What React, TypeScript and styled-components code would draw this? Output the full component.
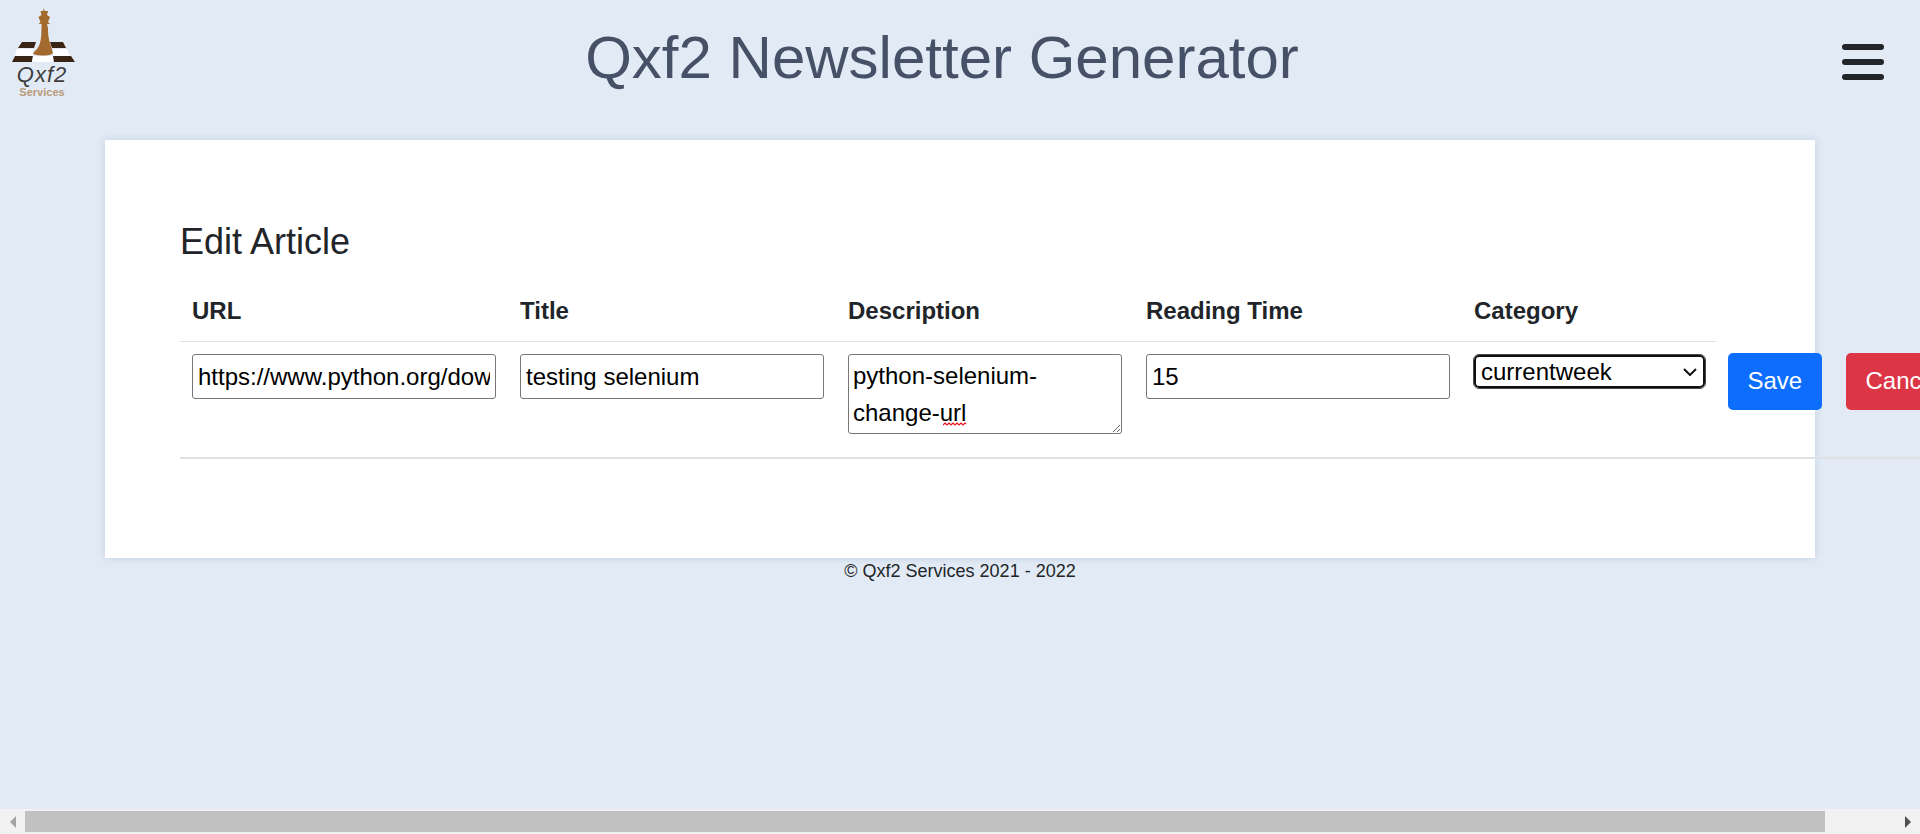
import React from 'react';
import styled, { createGlobalStyle } from 'styled-components';

const GlobalStyle = createGlobalStyle`
    html {
        height: 100%;
    }
    body {
        margin: 0;
        min-height: 100%;
        background-color: #e2ebf5;
        color: #212529;
        font-family: "Liberation Sans", Arial, sans-serif;
        font-size: 24px;
        line-height: 37.5px;
    }
`;

const Header = styled.header`
    display: flex;
    align-items: flex-start;
    height: 140px;
    width: 1920px;
    box-sizing: border-box;
    padding: 8px 36px 0 10px;
`;

const Title = styled.h1`
    flex: 1;
    margin: 14px 0 0;
    padding-right: 34px;
    text-align: center;
    color: #465168;
    font-size: 60px;
    font-weight: 400;
    line-height: 72px;
`;

const Burger = styled.div`
    display: flex;
    flex-direction: column;
    gap: 9px;
    width: 42px;
    margin-top: 36px;
`;

const BurgerBar = styled.span`
    height: 6px;
    border-radius: 3px;
    background-color: #212529;
`;

const Card = styled.main`
    width: 1710px;
    height: 418px;
    box-sizing: border-box;
    margin-left: 105px;
    padding: 81px 0 0 75px;
    background-color: #ffffff;
    box-shadow: 0 0 8px rgba(120, 145, 190, 0.3);
`;

const Heading = styled.h2`
    margin: 0 0 15px;
    font-size: 36px;
    font-weight: 400;
    line-height: 42px;
`;

const Table = styled.table`
    border-collapse: collapse;
    table-layout: fixed;
    width: 1815px;
`;

const HeadCell = styled.th`
    padding: 13.5px 12px 11.5px;
    border-bottom: 1px solid #dee2e6;
    font-weight: 700;
    text-align: left;
`;

const Row = styled.tr`
    border-bottom: 2px solid #dee2e6;
`;

const Cell = styled.td`
    padding: 12.5px 12px;
    vertical-align: top;
`;

const TextInput = styled.input`
    display: block;
    width: 304px;
    height: 45px;
    box-sizing: border-box;
    padding: 1px 5px;
    border: 1px solid #767676;
    border-radius: 3px;
    background-color: #ffffff;
    color: #000000;
    font-family: inherit;
    font-size: 24px;
`;

const AreaWrap = styled.div`
    position: relative;
    margin-bottom: 10px;
`;

const TextArea = styled.textarea`
    display: block;
    width: 274px;
    height: 80px;
    box-sizing: border-box;
    padding: 2px 4px;
    border: 1px solid #767676;
    border-radius: 3px;
    color: #000000;
    font-family: inherit;
    font-size: 24px;
    line-height: 37px;
`;

const Squiggle = styled.svg`
    position: absolute;
    left: 95px;
    top: 68px;
    width: 25px;
    height: 4px;
`;

const CategorySelect = styled.select`
    display: block;
    width: 231px;
    height: 33px;
    margin-top: 1px;
    box-sizing: border-box;
    padding: 0 30px 0 5px;
    appearance: none;
    border: 2px solid #101010;
    border-radius: 5px;
    outline: 1px solid #4a4a4a;
    background-color: #ffffff;
    background-image: url("data:image/svg+xml,%3Csvg xmlns='http://www.w3.org/2000/svg' width='14' height='8'%3E%3Cpath d='M1 1l6 6 6-6' fill='none' stroke='%23111' stroke-width='2'/%3E%3C/svg%3E");
    background-repeat: no-repeat;
    background-position: right 6px center;
    color: #000000;
    font-family: inherit;
    font-size: 24px;
`;

const Button = styled.button<{ $tone: string }>`
    display: block;
    height: 57px;
    margin-top: -1px;
    padding: 0 19.5px;
    border: 0;
    border-radius: 5px;
    background-color: ${(props) => props.$tone};
    color: #ffffff;
    font-family: inherit;
    font-size: 24px;
`;

const Footer = styled.footer`
    width: 1920px;
    text-align: center;
    font-size: 18px;
    line-height: 26px;
`;

const ScrollBar = styled.div`
    position: fixed;
    left: 0;
    right: 0;
    bottom: 0;
    display: flex;
    height: 25px;
    background-color: #f1f1f1;
`;

const ScrollArrow = styled.span<{ $dir: 'left' | 'right' }>`
    display: flex;
    flex: 0 0 25px;
    align-items: center;
    justify-content: center;

    &::before {
        content: '';
        border-top: 6px solid transparent;
        border-bottom: 6px solid transparent;
        border-left: ${(props) => (props.$dir === 'right' ? '6px solid #505050' : '0')};
        border-right: ${(props) => (props.$dir === 'left' ? '6px solid #a3a3a3' : '0')};
    }
`;

const ScrollTrack = styled.div`
    flex: 1;
    padding: 2px 0;
`;

const ScrollThumb = styled.div`
    width: 1800px;
    height: 100%;
    background-color: #c1c1c1;
`;

const Logo = () => (
    <svg width="66" height="90" viewBox="10 8 66 90" style={{ flexShrink: 0 }}>
        {/* plateau */}
        <polygon points="22,42 36,42 34,48 18,48" fill="#3a2415" />
        <polygon points="50,42 63,42 66,48 52,48" fill="#3a2415" />
        <polygon points="17,49 33,49 33,56 15,56" fill="#ffffff" />
        <polygon points="53,49 67,49 70,56 53,56" fill="#ffffff" />
        <polygon points="15,56 33,56 32,62 12,62" fill="#3a2415" />
        <polygon points="33,56 53,56 53,62 32,62" fill="#ffffff" />
        <polygon points="53,56 71,56 75,62 54,62" fill="#3a2415" />
        {/* piece */}
        <path
            d="M43 8l2 3h3l-1 4 3 2-2 5 2 2h-3l1 4c0 8 1 13 3 18l2 7-1 1c-5 2-12 2-19 0l1-2c4-3 6-7 7-14 .5-5 .5-9 .5-14h-3l2-2-2-5 3-2-1-4h3z"
            fill="#a4692d"
        />
        <text x="42" y="82" textAnchor="middle" fontFamily="Liberation Sans, sans-serif" fontSize="22" fontStyle="italic" letterSpacing="1" fill="#3d3d3d">
            Qxf2
        </text>
        <text x="42" y="96" textAnchor="middle" fontFamily="Liberation Sans, sans-serif" fontSize="11" fontWeight="700" fill="#b89a78">
            Services
        </text>
    </svg>
);

const App = () => {
    return (
        <>
            <GlobalStyle />
            <Header>
                <Logo />
                <Title>Qxf2 Newsletter Generator</Title>
                <Burger>
                    <BurgerBar />
                    <BurgerBar />
                    <BurgerBar />
                </Burger>
            </Header>
            <Card>
                <Heading>Edit Article</Heading>
                <Table>
                    <colgroup>
                        <col width="328" />
                        <col width="328" />
                        <col width="298" />
                        <col width="328" />
                        <col width="254" />
                        <col width="118" />
                        <col width="161" />
                    </colgroup>
                    <thead>
                        <tr>
                            <HeadCell>URL</HeadCell>
                            <HeadCell>Title</HeadCell>
                            <HeadCell>Description</HeadCell>
                            <HeadCell>Reading Time</HeadCell>
                            <HeadCell>Category</HeadCell>
                        </tr>
                    </thead>
                    <tbody>
                        <Row>
                            <Cell>
                                <TextInput defaultValue="https://www.python.org/downloads/" />
                            </Cell>
                            <Cell>
                                <TextInput defaultValue="testing selenium" />
                            </Cell>
                            <Cell>
                                <AreaWrap>
                                    <TextArea defaultValue="python-selenium-change-url" spellCheck={false} />
                                    <Squiggle viewBox="0 0 25 4">
                                        <path d="M0 3l2-2 2 2 2-2 2 2 2-2 2 2 2-2 2 2 2-2 2 2 2-2 1 1" fill="none" stroke="#e8101c" strokeWidth="1.2" />
                                    </Squiggle>
                                </AreaWrap>
                            </Cell>
                            <Cell>
                                <TextInput defaultValue="15" />
                            </Cell>
                            <Cell>
                                <CategorySelect defaultValue="currentweek">
                                    <option value="currentweek">currentweek</option>
                                </CategorySelect>
                            </Cell>
                            <Cell>
                                <Button $tone="#0d6efd">Save</Button>
                            </Cell>
                            <Cell>
                                <Button $tone="#dc3545">Cancel</Button>
                            </Cell>
                        </Row>
                    </tbody>
                </Table>
            </Card>
            <Footer>© Qxf2 Services 2021 - 2022</Footer>
            <ScrollBar>
                <ScrollArrow $dir="left" />
                <ScrollTrack>
                    <ScrollThumb />
                </ScrollTrack>
                <ScrollArrow $dir="right" />
            </ScrollBar>
        </>
    );
};

export default App;
